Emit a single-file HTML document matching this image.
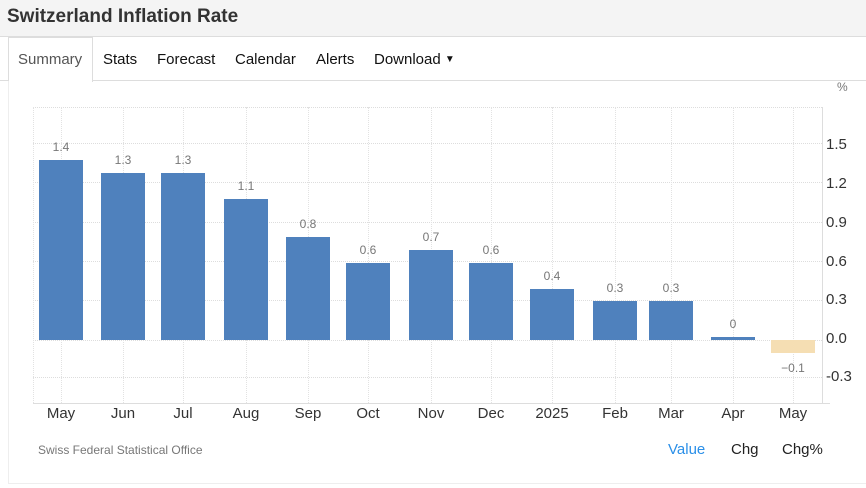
<!DOCTYPE html><html><head><style>
body{margin:0;width:866px;height:488px;background:#fff;font-family:"Liberation Sans",Arial,sans-serif;position:relative;overflow:hidden}
.a{position:absolute}
.hdr{left:0;top:0;width:866px;height:36px;background:#f4f4f4;border-bottom:1px solid #ddd}
.hdr h1{margin:0;position:absolute;left:7px;top:6px;font-size:19px;font-weight:bold;color:#333}
.tab{top:51px;font-size:15px;color:#111}
.bar{background:#4f81bd;width:44px}
.vl{font-size:12px;color:#777;width:60px;text-align:center}
.xl{top:405px;font-size:15px;color:#333;width:60px;text-align:center}
.yl{left:826px;font-size:15px;color:#333}
.hg{left:33px;width:789px;border-top:1px dotted #ddd;height:0}
.vg{top:107px;height:296px;border-left:1px dotted #e2e2e2;width:0}
</style></head><body>
<div class="a hdr"><h1>Switzerland Inflation Rate</h1></div>
<div class="a" style="left:0;top:80px;width:866px;border-top:1px solid #ddd"></div>
<div class="a" style="left:8px;top:37px;width:83px;height:44px;background:#fff;border:1px solid #ddd;border-bottom:none"></div>
<div class="a" style="left:8px;top:81px;height:402px;border-left:1px solid #eee"></div>
<div class="a" style="left:8px;top:483px;width:858px;border-top:1px solid #eee"></div>
<div class="a tab" style="left:18px;color:#555">Summary</div>
<div class="a tab" style="left:103px">Stats</div>
<div class="a tab" style="left:157px">Forecast</div>
<div class="a tab" style="left:235px">Calendar</div>
<div class="a tab" style="left:316px">Alerts</div>
<div class="a tab" style="left:374px">Download <span style="font-size:10px;position:relative;top:-2px">&#9660;</span></div>
<div class="a" style="left:837px;top:80px;font-size:12px;color:#777">%</div>
<div class="a hg" style="top:107px"></div>
<div class="a hg" style="top:143px"></div>
<div class="a hg" style="top:182px"></div>
<div class="a hg" style="top:222px"></div>
<div class="a hg" style="top:261px"></div>
<div class="a hg" style="top:300px"></div>
<div class="a hg" style="top:340px"></div>
<div class="a hg" style="top:377px"></div>
<div class="a vg" style="left:33px"></div>
<div class="a vg" style="left:61px"></div><div class="a vg" style="left:123px"></div><div class="a vg" style="left:183px"></div><div class="a vg" style="left:246px"></div><div class="a vg" style="left:308px"></div><div class="a vg" style="left:368px"></div><div class="a vg" style="left:431px"></div><div class="a vg" style="left:491px"></div><div class="a vg" style="left:552px"></div><div class="a vg" style="left:615px"></div><div class="a vg" style="left:671px"></div><div class="a vg" style="left:733px"></div><div class="a vg" style="left:793px"></div>
<div class="a" style="left:822px;top:107px;height:296px;border-left:1px solid #ddd"></div>
<div class="a" style="left:33px;top:403px;width:797px;border-top:1px solid #ddd"></div>
<div class="a bar" style="left:39px;top:160px;height:180px"></div>
<div class="a bar" style="left:101px;top:173px;height:167px"></div>
<div class="a bar" style="left:161px;top:173px;height:167px"></div>
<div class="a bar" style="left:224px;top:199px;height:141px"></div>
<div class="a bar" style="left:286px;top:237px;height:103px"></div>
<div class="a bar" style="left:346px;top:263px;height:77px"></div>
<div class="a bar" style="left:409px;top:250px;height:90px"></div>
<div class="a bar" style="left:469px;top:263px;height:77px"></div>
<div class="a bar" style="left:530px;top:289px;height:51px"></div>
<div class="a bar" style="left:593px;top:301px;height:39px"></div>
<div class="a bar" style="left:649px;top:301px;height:39px"></div>
<div class="a bar" style="left:711px;top:337px;height:3px"></div>
<div class="a" style="left:771px;top:340px;width:44px;height:13px;background:#f5deb3"></div>
<div class="a vl" style="left:31px;top:140px">1.4</div>
<div class="a vl" style="left:93px;top:153px">1.3</div>
<div class="a vl" style="left:153px;top:153px">1.3</div>
<div class="a vl" style="left:216px;top:179px">1.1</div>
<div class="a vl" style="left:278px;top:217px">0.8</div>
<div class="a vl" style="left:338px;top:243px">0.6</div>
<div class="a vl" style="left:401px;top:230px">0.7</div>
<div class="a vl" style="left:461px;top:243px">0.6</div>
<div class="a vl" style="left:522px;top:269px">0.4</div>
<div class="a vl" style="left:585px;top:281px">0.3</div>
<div class="a vl" style="left:641px;top:281px">0.3</div>
<div class="a vl" style="left:703px;top:317px">0</div>
<div class="a vl" style="left:763px;top:361px">&minus;0.1</div>
<div class="a yl" style="top:136px">1.5</div>
<div class="a yl" style="top:175px">1.2</div>
<div class="a yl" style="top:214px">0.9</div>
<div class="a yl" style="top:253px">0.6</div>
<div class="a yl" style="top:291px">0.3</div>
<div class="a yl" style="top:330px">0.0</div>
<div class="a yl" style="top:368px">-0.3</div>
<div class="a xl" style="left:31px">May</div><div class="a xl" style="left:93px">Jun</div><div class="a xl" style="left:153px">Jul</div><div class="a xl" style="left:216px">Aug</div><div class="a xl" style="left:278px">Sep</div><div class="a xl" style="left:338px">Oct</div><div class="a xl" style="left:401px">Nov</div><div class="a xl" style="left:461px">Dec</div><div class="a xl" style="left:522px">2025</div><div class="a xl" style="left:585px">Feb</div><div class="a xl" style="left:641px">Mar</div><div class="a xl" style="left:703px">Apr</div><div class="a xl" style="left:763px">May</div>
<div class="a" style="left:38px;top:443px;font-size:12px;color:#777">Swiss Federal Statistical Office</div>
<div class="a" style="left:668px;top:441px;font-size:15px;color:#2a8fe8">Value</div>
<div class="a" style="left:731px;top:441px;font-size:15px;color:#222">Chg</div>
<div class="a" style="left:782px;top:441px;font-size:15px;color:#222">Chg%</div>
</body></html>
